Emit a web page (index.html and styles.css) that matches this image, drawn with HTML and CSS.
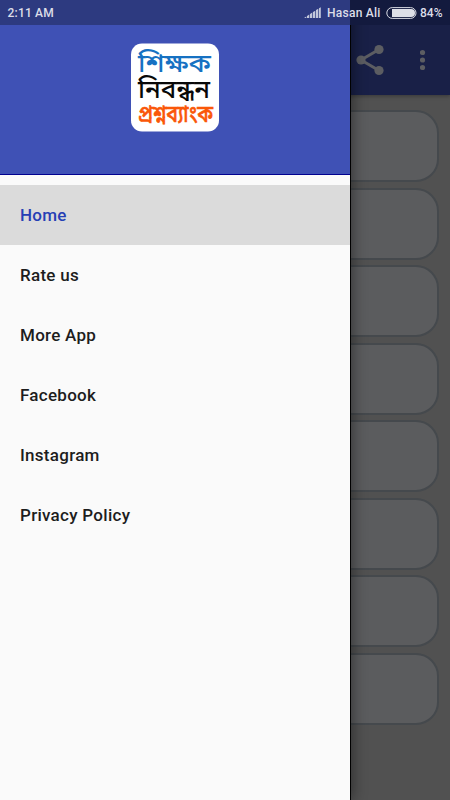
FILE: index.html
```html
<!DOCTYPE html>
<html lang="en">
<head>
<meta charset="utf-8">
<meta name="viewport" content="width=device-width">
<title>Question Bank</title>
<link rel="stylesheet" href="styles.css">
</head>
<body>
<div class="screen">
  <main class="app">
    <header class="toolbar">
      <svg class="share" width="28" height="32" viewBox="0 0 28 32"><path d="M23 5.5 5 16l18 10.500" fill="none" stroke="currentColor" stroke-width="3"/><g fill="currentColor"><circle cx="5" cy="16" r="4.600"/><circle cx="23" cy="5.500" r="4.600"/><circle cx="23" cy="26.500" r="4.600"/></g></svg>
      <svg class="more" width="6" height="22" viewBox="0 0 6 22" fill="currentColor"><circle cx="2.500" cy="3.500" r="2.600"/><circle cx="2.500" cy="11" r="2.600"/><circle cx="2.500" cy="18.500" r="2.600"/></svg>
    </header>
    <div class="cards">
      <div class="card"></div><div class="card"></div><div class="card"></div><div class="card"></div>
      <div class="card"></div><div class="card"></div><div class="card"></div><div class="card"></div>
    </div>
  </main>
  <aside class="drawer">
    <div class="drawer-header">
      <svg class="logo" width="88" height="88" viewBox="0 0 88 88" lang="bn">
        <rect y=".5" width="88" height="88" rx="11" fill="#fff"/>
        <text x="7" y="28.500" font-size="25" textLength="73" lengthAdjust="spacingAndGlyphs" fill="#1671c2">শিক্ষক</text>
        <text x="7" y="55" font-size="25" textLength="72" lengthAdjust="spacingAndGlyphs" fill="#080808">নিবন্ধন</text>
        <text class="logo-bold" x="7" y="79" font-size="23" textLength="75" lengthAdjust="spacingAndGlyphs" fill="#fa5708">প্রশ্নব্যাংক</text>
      </svg>
    </div>
    <nav class="menu">
      <a class="item active">Home</a>
      <a class="item">Rate us</a>
      <a class="item">More App</a>
      <a class="item">Facebook</a>
      <a class="item">Instagram</a>
      <a class="item">Privacy Policy</a>
    </nav>
  </aside>
  <div class="status">
    <span class="time">2:11 AM</span>
    <svg class="signal" width="17" height="12" viewBox="0 0 17 12" fill="#c3c8dc"><path d="M0 11l2.300-1.500V11zM3 9l2.300-1.500V11H3zM6 7l2.300-1.500V11H6zM9 5l2.300-1.300V11H9zM12 3l2.300-1.300V11H12zM15 1.300 16.800.300V11H15z"/></svg>
    <span class="carrier">Hasan Ali</span>
    <svg class="battery" width="31" height="12" viewBox="0 0 31 12"><rect x=".8" y=".6" width="29.200" height="10.800" rx="5.400" fill="none" stroke="#d7d9e2"/><path d="M6 2h19a4 4 0 0 1 0 8H6z" fill="#dddfe7"/></svg>
    <span class="percent">84%</span>
  </div>
</div>
</body>
</html>
```
FILE: styles.css
```css
* { box-sizing: border-box; }
body { margin: 0; font-family: Roboto, "Noto Sans", sans-serif; }
.screen { position: relative; width: 450px; height: 800px; overflow: hidden; background: #515151; }
.status {
  position: absolute; inset: 0 0 auto; height: 25px;
  display: flex; align-items: center; padding: 1px 8px 0 7.500px;
  font-size: 12px; font-weight: 500; line-height: 24px; color: #dcdee8;
  background: linear-gradient(90deg, #2d3a80 350px, #131a3e 350px);
}
.time { flex: 1; letter-spacing: .2px; }
.signal { margin-right: 6px; }
.carrier { width: 59px; white-space: nowrap; letter-spacing: .25px; }
.battery { margin-right: 3px; }
.percent { width: 22px; white-space: nowrap; }
.app { height: 800px; }
.toolbar {
  height: 95px; padding: 25px 24px 0 0; display: flex; justify-content: flex-end; align-items: center;
  gap: 36px; background: #192047; color: #5c5d62; box-shadow: 0 1px 4px #0005;
}
.cards { display: grid; grid-auto-rows: 72px; gap: 5.570px; padding: 15px 11px 0; }
.card { border: 2px solid #45494d; border-radius: 23px; background: #5b5c5e; }
.drawer {
  position: absolute; inset: 0 auto 0 0; width: 350px; background: #fafafa;
  box-shadow: 1px 0 0 #000, 2px 0 14px #0007;
}
.drawer-header {
  height: 175px; padding-top: 43px; display: flex; justify-content: center; align-items: flex-start;
  background: #3f51b5; border-bottom: 1px solid #00008f;
}
.logo { overflow: visible; font-family: "Noto Sans Bengali", "Noto Sans", sans-serif; font-weight: 500; }
.logo-bold { stroke: #fa5708; stroke-width: .6px; }
.menu { padding-top: 10px; }
.item {
  display: flex; align-items: center; height: 60px; padding: 0 20px;
  font-size: 17px; font-weight: 500; letter-spacing: .28px; color: #1d1d1d;
}
.active { background: #dbdbdb; color: #263fb5; }
```
